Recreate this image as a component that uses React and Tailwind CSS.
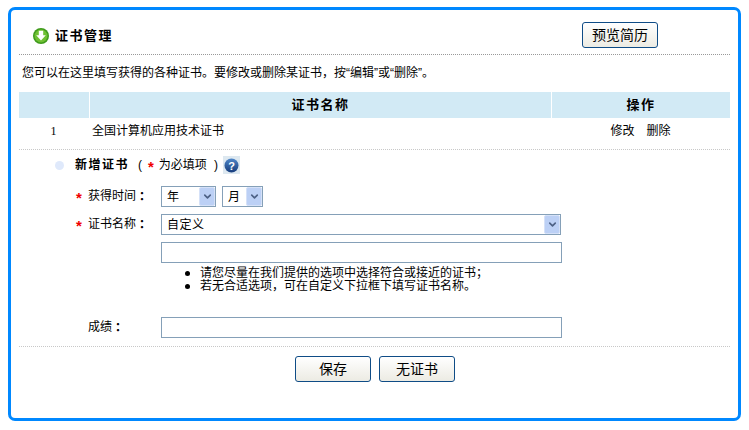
import { ChevronDown } from 'lucide-react';

const SelectBox = ({ label, className }) => (
    <div className={`h-[21px] border border-[#85a0b8] bg-white flex items-center justify-between pl-[5px] text-[12px] text-black ${className}`}>
        <span className="tracking-[0.5px]">{label}</span>
        <span className="w-4 h-[19px] rounded-[2px] bg-[#bcd0f5] border border-[#d5e1f8] flex items-center justify-center">
            <ChevronDown size={11} strokeWidth={3.5} className="text-[#4d6185]" />
        </span>
    </div>
);

const TextBox = () => (
    <div className="w-[401px] h-[21px] border border-[#85a0b8] bg-white" />
);

const Btn = ({ children, className = '' }) => (
    <button className={`w-[76px] h-[26px] border border-[#0f4c86] rounded-[3px] bg-gradient-to-b from-white to-[#ecebe3] text-[14px] text-black ${className}`}>
        {children}
    </button>
);

const Star = () => <span className="text-[#f00000] text-[15px] font-bold pt-[3px] leading-[17px]">*</span>;

const FormRow = ({ label, required, className, children }) => (
    <div className={`flex items-start ${className}`}>
        <div className="w-[142px] pl-[57px] flex text-[12px] leading-[20px]">
            <span className="w-3 flex">{required && <Star />}</span>
            <span>{label}</span>
            <span className="font-['Noto_Sans_CJK_TC',sans-serif] font-bold">：</span>
        </div>
        {children}
    </div>
);

export default function App() {
    return (
        <div className="w-[749px] h-[430px] bg-white pt-[7px] pl-2 font-['Liberation_Sans','Noto_Sans_CJK_SC',sans-serif] text-black">
            <div className="w-[733px] h-[414px] border-[3px] border-[#0088ff] rounded-[7px] px-2 bg-white">
                <div className="h-[36px] mt-[9px] border-b border-dotted border-[#999999] flex items-start justify-between">
                    <div className="flex items-center gap-[6px] pl-[14px] pt-[7px]">
                        <svg width="16" height="16" viewBox="0 0 16 16">
                            <circle cx="8" cy="8" r="8" fill="#3f9b1c" />
                            <circle cx="8" cy="8" r="6.5" fill="#6fc032" />
                            <path d="M5.8 2.8h4.4v4.4h2.6L8 12.6 3.2 7.2h2.6z" fill="#ffffff" />
                        </svg>
                        <span className="text-[13px] font-bold tracking-[1.5px]">证书管理</span>
                    </div>
                    <Btn className="mr-[72px] mt-[3px]">预览简历</Btn>
                </div>

                <p className="text-[12px] leading-[18px] mt-[9px] pl-[3px]">您可以在这里填写获得的各种证书。要修改或删除某证书，按“编辑”或“删除”。</p>

                <div className="mt-[10px] h-[26px] bg-[#d2eaf5] flex text-[13px] font-bold leading-[26px] text-center tracking-[1.5px]">
                    <div className="w-[71px] border-r border-white" />
                    <div className="w-[462px] border-r border-white">证书名称</div>
                    <div className="flex-1">操作</div>
                </div>
                <div className="h-[32px] flex text-[12px] leading-[26px] border-b border-dotted border-[#c8c8c8]">
                    <div className="w-[71px] text-center pr-[2px] font-['Liberation_Serif',serif]">1</div>
                    <div className="w-[462px] pl-[2px]">全国计算机应用技术证书</div>
                    <div className="flex-1 flex justify-center gap-[12px] pr-[1px]">
                        <span>修改</span>
                        <span>删除</span>
                    </div>
                </div>

                <div className="flex items-center h-[30px] pl-[36px] text-[12px]">
                    <span className="w-[9px] h-[9px] rounded-full bg-[#dfe9fb]" />
                    <span className="ml-[11px] font-bold tracking-[1.5px]">新增证书</span>
                    <span className="ml-[9px]">(</span>
                    <span className="ml-[6px] flex"><Star /></span>
                    <span className="ml-[5px]">为必填项</span>
                    <span className="ml-[7px]">)</span>
                    <span className="ml-[5px] w-[17px] h-[18px] bg-[#dde8f0] flex items-center justify-center">
                        <svg width="15" height="15" viewBox="0 0 15 15">
                            <defs>
                                <linearGradient id="helpBall" x1="0" y1="0" x2="0" y2="1">
                                    <stop offset="0" stopColor="#4f86c8" />
                                    <stop offset="1" stopColor="#163c7c" />
                                </linearGradient>
                            </defs>
                            <circle cx="7.5" cy="7.5" r="7" fill="url(#helpBall)" />
                            <text x="7.5" y="11.5" textAnchor="middle" fontSize="11" fontWeight="700" fill="#ffffff">?</text>
                        </svg>
                    </span>
                </div>

                <FormRow label="获得时间" required className="mt-[6px]">
                    <div className="flex gap-[6px]">
                        <SelectBox label="年" className="w-[55px]" />
                        <SelectBox label="月" className="w-[41px]" />
                    </div>
                </FormRow>
                <FormRow label="证书名称" required className="mt-[7px]">
                    <SelectBox label="自定义" className="w-[400px]" />
                </FormRow>
                <div className="ml-[142px] mt-[7px]">
                    <TextBox />
                    <ul className="pl-[24px] mt-[4px] mb-[24px] text-[12px] leading-[13px]">
                        <li className="flex items-center gap-[10px]">
                            <span className="w-[5px] h-[5px] rounded-full bg-black" />
                            请您尽量在我们提供的选项中选择符合或接近的证书；
                        </li>
                        <li className="flex items-center gap-[10px]">
                            <span className="w-[5px] h-[5px] rounded-full bg-black" />
                            若无合适选项，可在自定义下拉框下填写证书名称。
                        </li>
                    </ul>
                </div>
                <FormRow label="成绩">
                    <TextBox />
                </FormRow>

                <div className="mt-[8px] border-t border-dotted border-[#c8c8c8] pt-[9px] flex justify-center gap-[8px] pl-px">
                    <Btn>保存</Btn>
                    <Btn>无证书</Btn>
                </div>
            </div>
        </div>
    );
}
